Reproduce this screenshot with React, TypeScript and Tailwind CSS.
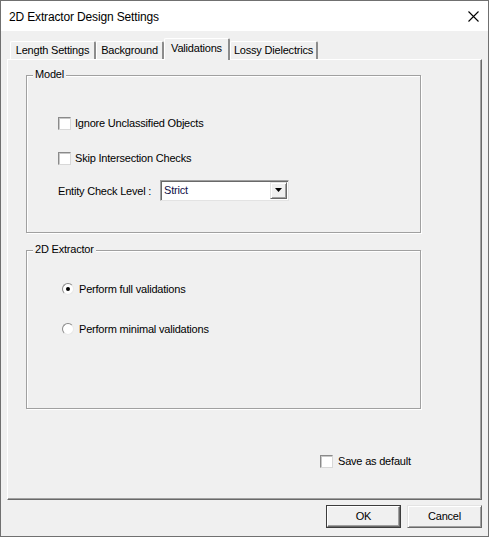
import React from "react";

function CheckBox() {
  return (
    <div className="w-[13px] h-[13px] bg-white border border-t-[#8a8a8a] border-l-[#8a8a8a] border-r-[#d8d8d8] border-b-[#d8d8d8] shadow-[inset_1px_1px_0_#c8c8c8] shrink-0" />
  );
}

function Radio({ checked }: { checked?: boolean }) {
  return (
    <div className="w-[12px] h-[12px] rounded-full bg-white border border-t-[#8a8a8a] border-l-[#8a8a8a] border-r-[#e8e8e8] border-b-[#e8e8e8] flex items-center justify-center shrink-0">
      {checked && <div className="w-[4px] h-[4px] rounded-full bg-black" />}
    </div>
  );
}

function GroupBox({ title, className, children }: { title: string; className: string; children?: React.ReactNode }) {
  return (
    <div className={"relative border border-[#a0a0a0] shadow-[inset_1px_1px_0_#ffffff,1px_1px_0_#ffffff] " + className}>
      <span className="absolute left-[6px] top-[-8px] bg-[#f0f0f0] px-[2px] leading-[13px]">{title}</span>
      {children}
    </div>
  );
}

export default function App() {
  return (
    <div className="w-[489px] h-[537px] flex flex-col border border-[#707070] bg-[#f0f0f0] font-['Liberation_Sans',Arial,sans-serif] text-[11px] tracking-[-0.2px] text-black overflow-hidden">
      {/* Title bar */}
      <div className="h-[30px] bg-white flex items-center justify-between shrink-0">
        <span className="pl-[8px] text-[12px] leading-[16px] tracking-[-0.15px] pt-[1px]">2D Extractor Design Settings</span>
        <svg width="11" height="11" viewBox="0 0 11 11" className="mr-[9px] mt-[1px]">
          <path d="M0.5 0.5 L10.5 10.5 M10.5 0.5 L0.5 10.5" stroke="#000" strokeWidth="1.1" fill="none" />
        </svg>
      </div>

      {/* Body */}
      <div className="flex-1 flex flex-col pt-[7px]">
        {/* Tabs */}
        <div className="flex items-end h-[21px] ml-[9px] relative z-10">
          <div className="w-[86px] h-[18px] border-t border-l border-white border-r-2 border-r-[#8c8c8c] rounded-t-[2px] flex items-center justify-center leading-[13px] pb-[1px]">Length Settings</div>
          <div className="w-[68px] h-[18px] border-t border-l border-white border-r-2 border-r-[#8c8c8c] rounded-t-[2px] flex items-center justify-center leading-[13px] pb-[1px]">Background</div>
          <div className="w-[66px] h-[22px] mb-[-1px] bg-[#f0f0f0] border-t border-l border-white border-r-2 border-r-[#8c8c8c] rounded-t-[2px] flex items-start justify-center leading-[13px] pt-[3px]">Validations</div>
          <div className="w-[88px] h-[18px] border-t border-l border-white border-r-2 border-r-[#8c8c8c] rounded-t-[2px] flex items-center justify-center leading-[13px] pb-[1px]">Lossy Dielectrics</div>
        </div>

        {/* Panel */}
        <div className="ml-[6px] w-[475px] h-[441px] border-t border-l border-white border-r border-b border-r-[#696969] border-b-[#696969] shadow-[inset_-1px_-1px_0_#a0a0a0] flex flex-col">
          <GroupBox title="Model" className="ml-[18px] mt-[15px] w-[395px] h-[158px] pl-[31px] pt-[41px] flex flex-col">
            <div className="flex items-center h-[13px] gap-[4px]">
              <CheckBox />
              <span className="leading-[13px]">Ignore Unclassified Objects</span>
            </div>
            <div className="flex items-center h-[13px] gap-[4px] mt-[22px]">
              <CheckBox />
              <span className="leading-[13px]">Skip Intersection Checks</span>
            </div>
            <div className="flex items-center h-[20px] mt-[15px]">
              <span className="leading-[13px] w-[102px] pt-[2px]">Entity Check Level :</span>
              <div className="w-[129px] h-[21px] bg-white border border-t-[#a0a0a0] border-l-[#a0a0a0] border-r-[#e3e3e3] border-b-[#e3e3e3] shadow-[inset_1px_1px_0_#696969] flex items-center justify-between pl-[3px] pr-[1px]">
                <span className="leading-[13px] pt-[1px] text-[#10104a]">Strict</span>
                <div className="w-[17px] h-[17px] bg-[#f0f0f0] border border-t-[#e3e3e3] border-l-[#e3e3e3] border-r-[#696969] border-b-[#696969] shadow-[inset_1px_1px_0_#ffffff,inset_-1px_-1px_0_#a0a0a0] flex items-center justify-center">
                  <svg width="7" height="4" viewBox="0 0 7 4"><path d="M0 0 L7 0 L3.5 4 Z" fill="#000" /></svg>
                </div>
              </div>
            </div>
          </GroupBox>

          <GroupBox title="2D Extractor" className="ml-[18px] mt-[17px] w-[395px] h-[159px] pl-[35px] pt-[32px] flex flex-col">
            <div className="flex items-center h-[12px] gap-[5px]">
              <Radio checked />
              <span className="leading-[13px]">Perform full validations</span>
            </div>
            <div className="flex items-center h-[12px] gap-[5px] mt-[28px]">
              <Radio />
              <span className="leading-[13px]">Perform minimal validations</span>
            </div>
          </GroupBox>

          <div className="flex items-center h-[13px] gap-[5px] ml-[312px] mt-[46px]">
            <CheckBox />
            <span className="leading-[13px]">Save as default</span>
          </div>
        </div>

        {/* Buttons */}
        <div className="flex justify-end gap-[6px] pr-[6px] mt-[5px]">
          <div className="w-[75px] h-[23px] border border-[#3c3c3c] flex">
            <div className="flex-1 border border-t-white border-l-white border-r-[#696969] border-b-[#696969] shadow-[inset_-1px_-1px_0_#a0a0a0] flex items-center justify-center leading-[13px]">OK</div>
          </div>
          <div className="w-[75px] h-[23px] border border-t-[#e3e3e3] border-l-[#e3e3e3] border-r-[#696969] border-b-[#696969] shadow-[inset_1px_1px_0_#ffffff,inset_-1px_-1px_0_#a0a0a0] flex items-center justify-center leading-[13px]">Cancel</div>
        </div>
      </div>
    </div>
  );
}
